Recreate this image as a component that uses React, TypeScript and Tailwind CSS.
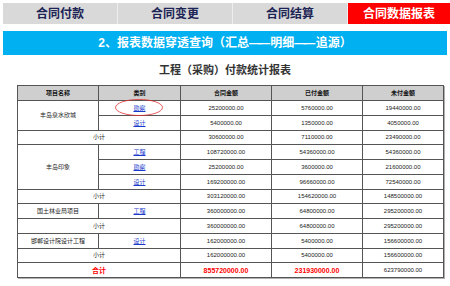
import React from 'react';

type Row = {
  name?: string;
  span?: number;
  type?: string;
  sub?: boolean;
  total?: boolean;
  amount: string;
  paid: string;
  unpaid: string;
};

const rows: Row[] = [
  { name: '丰岛泉水欣城', span: 2, type: '勘察', amount: '25200000.00', paid: '5760000.00', unpaid: '19440000.00' },
  { type: '设计', amount: '5400000.00', paid: '1350000.00', unpaid: '4050000.00' },
  { sub: true, amount: '30600000.00', paid: '7110000.00', unpaid: '23490000.00' },
  { name: '丰岛印象', span: 3, type: '工程', amount: '108720000.00', paid: '54360000.00', unpaid: '54360000.00' },
  { type: '勘察', amount: '25200000.00', paid: '3600000.00', unpaid: '21600000.00' },
  { type: '设计', amount: '169200000.00', paid: '96660000.00', unpaid: '72540000.00' },
  { sub: true, amount: '303120000.00', paid: '154620000.00', unpaid: '148500000.00' },
  { name: '国土林业局项目', span: 1, type: '工程', amount: '360000000.00', paid: '64800000.00', unpaid: '295200000.00' },
  { sub: true, amount: '360000000.00', paid: '64800000.00', unpaid: '295200000.00' },
  { name: '邯郸设计院设计工程', span: 1, type: '设计', amount: '162000000.00', paid: '5400000.00', unpaid: '156600000.00' },
  { sub: true, amount: '162000000.00', paid: '5400000.00', unpaid: '156600000.00' },
  { total: true, amount: '855720000.00', paid: '231930000.00', unpaid: '623790000.00' },
];

const tabs = ['合同付款', '合同变更', '合同结算', '合同数据报表'];

const cell = 'border border-[#555] text-center align-middle p-0 leading-none';
const red = `${cell} text-[#ff0000] font-bold text-[7px]`;

export default function App() {
  return (
    <div
      className="relative w-[450px] h-[286px] bg-white overflow-hidden"
      style={{ fontFamily: '"Liberation Sans", "Noto Sans CJK SC", sans-serif' }}
    >
      {/* tabs */}
      <div className="mt-[3px] ml-[3px] flex h-[21px] bg-[#d9d9d9]">
        {tabs.map((t, i) => (
          <div
            key={t}
            className={
              i === 3
                ? 'flex flex-1 items-center justify-center bg-[#ff0000] text-white font-bold text-[12px]'
                : 'flex w-[115px] items-center justify-center border-r border-[#eeeeee] text-[#1c2455] font-bold text-[12px]'
            }
          >
            {t}
          </div>
        ))}
      </div>

      {/* title bar */}
      <div className="mt-[7px] mx-[3px] flex h-[24px] items-center justify-center bg-[#00b0f0] text-white font-bold text-[12px]">
        2、报表数据穿透查询（汇总<span className="tracking-[-3px]">——</span>&nbsp;明细<span className="tracking-[-3px]">——</span>&nbsp;追源）
      </div>

      <div className="flex h-[30px] items-center justify-center text-[#333] font-bold text-[11px]">
        工程（采购）付款统计报表
      </div>

      <table className="ml-[17px] w-[426px] table-fixed border-collapse border border-[#555] shadow-[1px_1px_0_#b0b0b0] text-[6px] text-[#222]">
        <colgroup>
          <col className="w-[81px]" />
          <col className="w-[82px]" />
          <col className="w-[91px]" />
          <col className="w-[91px]" />
          <col className="w-[81px]" />
        </colgroup>
        <thead>
          <tr className="h-[15px] bg-[#cfcfcf] font-bold text-[#111]">
            <th className={cell}>项目名称</th>
            <th className={cell}>类别</th>
            <th className={cell}>合同金额</th>
            <th className={cell}>已付金额</th>
            <th className={cell}>未付金额</th>
          </tr>
        </thead>
        <tbody>
          {rows.map((r, i) => (
            <tr key={i} className="h-[14.75px]">
              {r.name && (
                <td className={cell} rowSpan={r.span}>
                  {r.name}
                </td>
              )}
              {r.type && (
                <td className={cell}>
                  <span className="text-[#1a3ccc] underline">{r.type}</span>
                </td>
              )}
              {r.sub && (
                <td className={cell} colSpan={2}>
                  小计
                </td>
              )}
              {r.total && (
                <td className={red} colSpan={2}>
                  合计
                </td>
              )}
              <td className={r.total ? red : cell}>{r.amount}</td>
              <td className={r.total ? red : cell}>{r.paid}</td>
              <td className={cell}>{r.unpaid}</td>
            </tr>
          ))}
        </tbody>
      </table>

      {/* hand-drawn highlight around the first 勘察 */}
      <svg className="absolute left-[114px] top-[98px]" width="50" height="19" viewBox="0 0 50 19">
        <ellipse cx="25" cy="9.5" rx="23.5" ry="8" fill="none" stroke="#e03030" strokeWidth="0.8" />
      </svg>
    </div>
  );
}
